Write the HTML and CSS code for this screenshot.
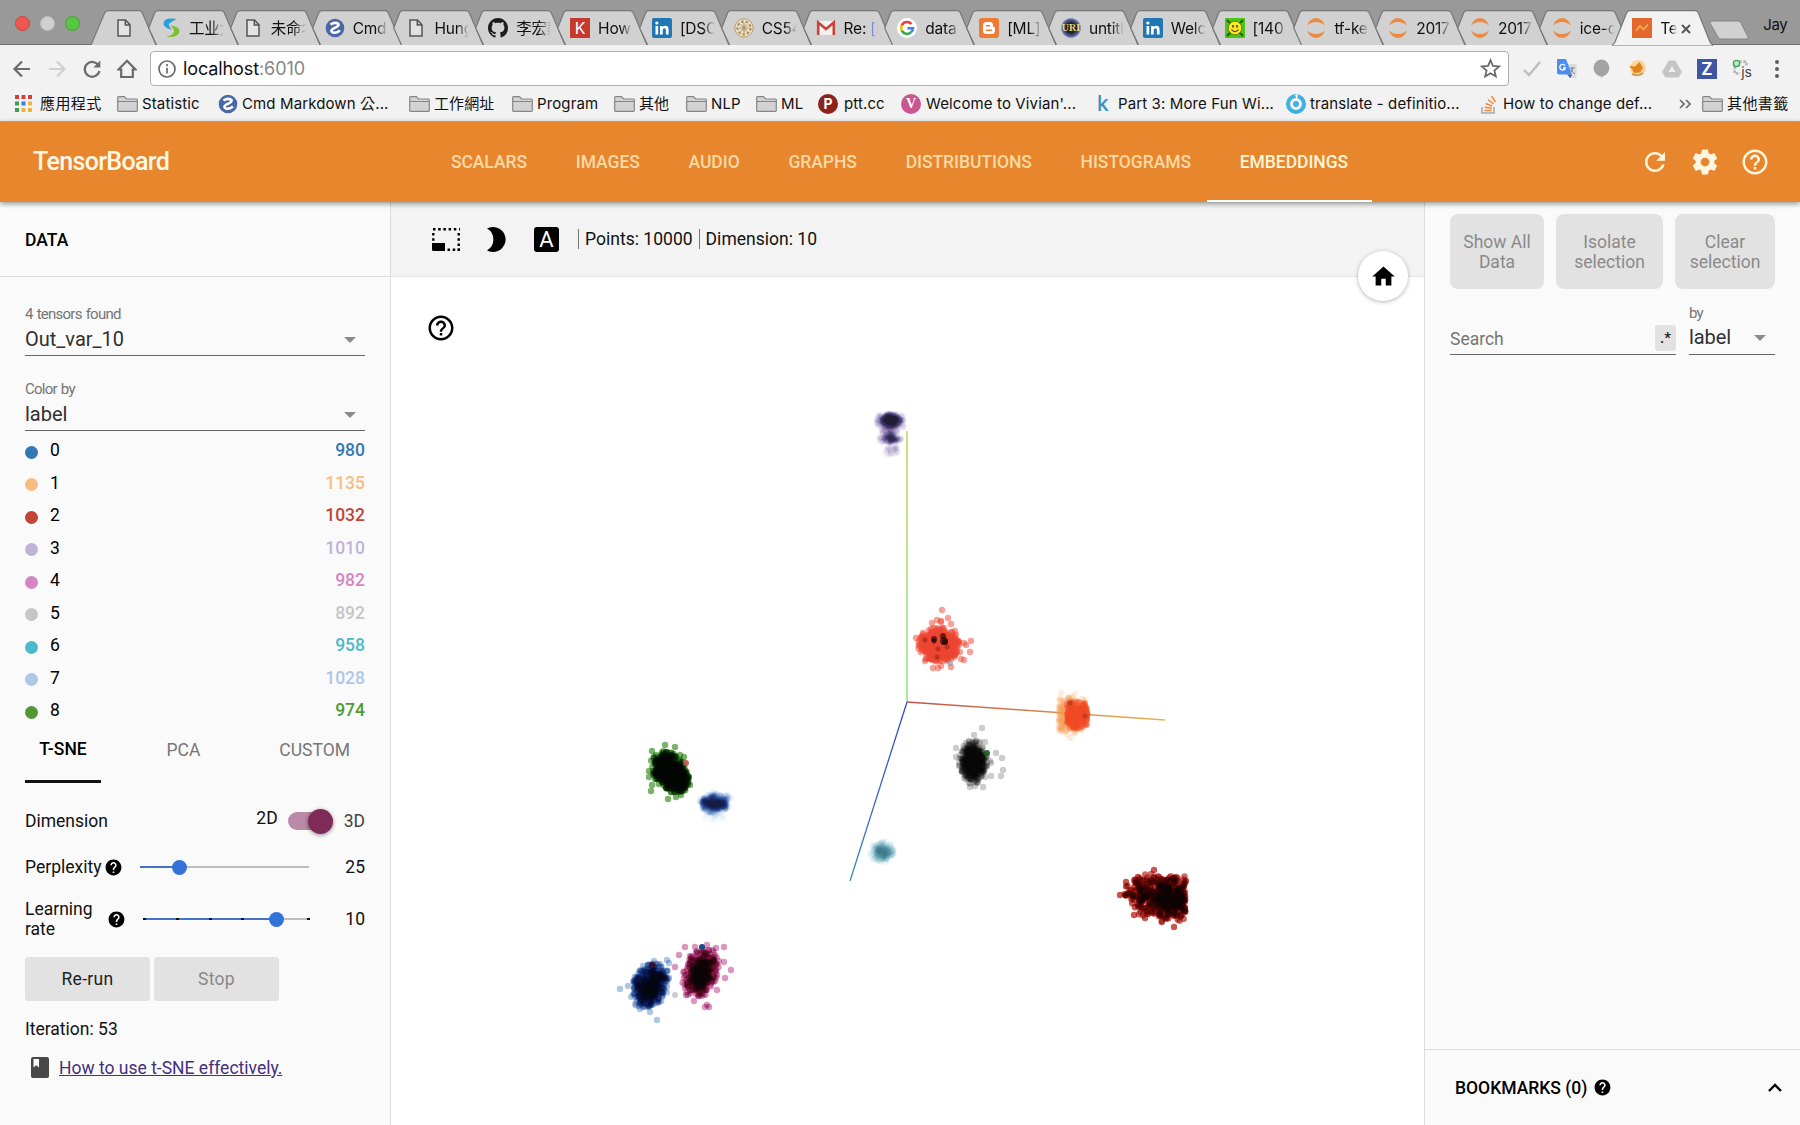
FILE: index.html
```html
<!DOCTYPE html>
<html lang="zh-Hant">
<head>
<meta charset="utf-8">
<title>TensorBoard</title>
<link rel="stylesheet" href="styles.css">
</head>
<body>
<svg class="defs" width="0" height="0">
  <symbol id="tab" viewBox="0 0 98 35"><path d="M15.5 35L7.7 18L13.6 3Q14.5 .7 17 .7H80Q82.500 .7 83.400 3L97 35"/></symbol>
  <symbol id="doc" viewBox="0 0 14 18"><path d="M1 1h7.500l4.500 4.800V17H1zM8.300 1v5H13" fill="#e3e3e3" stroke="#555" stroke-width="1.500"/></symbol>
  <symbol id="folder" viewBox="0 0 21 16"><path d="M.7 14.500V1.500Q.7.700 1.500.700H7.500L9.500 3H19.500Q20.300 3 20.300 4V14.500Q20.300 15.300 19.500 15.300H1.500Q.7 15.300.7 14.500zM.7 5.500H20.300" fill="#d3d3d3" stroke="#868686" stroke-width="1.200"/></symbol>
  <symbol id="cmd" viewBox="0 0 20 20"><circle cx="10" cy="10" r="9.300" fill="#4a68a8"/><path d="M5.500 6.500Q10 3.500 13.500 6Q14.500 8 8.500 10.500Q4.500 13 8 14.500Q11 15.500 15 12.500" fill="none" stroke="#fff" stroke-width="2.600"/></symbol>
  <symbol id="in" viewBox="0 0 20 20"><rect width="20" height="20" rx="2" fill="#1f78b4"/><path d="M3.500 8h2.700v8.500H3.500zM8 8h2.600v1.200Q11.500 7.800 13.400 7.800Q16.600 7.800 16.600 11.700V16.500H13.900V12Q13.900 10.200 12.400 10.200Q10.700 10.200 10.700 12.200V16.500H8z" fill="#fff"/><circle cx="4.850" cy="5" r="1.600" fill="#fff"/></symbol>
  <symbol id="jup" viewBox="0 0 20 20"><path d="M1 7.500Q4 0 10 0T19 7.500Q15 4 10 4T1 7.500zM1 12.500Q4 20 10 20T19 12.500Q15 16 10 16T1 12.500z" fill="#ec8a42"/></symbol>
  <symbol id="help" viewBox="0 0 24 24"><path d="M11 18h2v-2h-2v2zm1-16C6.480 2 2 6.480 2 12s4.480 10 10 10 10-4.480 10-10S17.520 2 12 2zm0 18c-4.410 0-8-3.590-8-8s3.590-8 8-8 8 3.590 8 8-3.590 8-8 8zm0-14c-2.210 0-4 1.790-4 4h2c0-1.100.9-2 2-2s2 .9 2 2c0 2-3 1.750-3 5h2c0-2.250 3-2.500 3-5 0-2.210-1.790-4-4-4z"/></symbol>
  <symbol id="helpf" viewBox="0 0 24 24"><path d="M12 2C6.480 2 2 6.480 2 12s4.480 10 10 10 10-4.480 10-10S17.520 2 12 2zm1 17h-2v-2h2v2zm2.070-7.750l-.9.920C13.450 12.900 13 13.500 13 15h-2v-.5c0-1.100.45-2.100 1.170-2.830l1.240-1.260c.37-.36.590-.86.590-1.410 0-1.100-.9-2-2-2s-2 .9-2 2H8c0-2.210 1.790-4 4-4s4 1.790 4 4c0 .88-.36 1.680-.93 2.250z"/></symbol>
  <symbol id="refresh" viewBox="0 0 24 24"><path d="M17.650 6.350C16.200 4.900 14.210 4 12 4c-4.420 0-7.990 3.580-7.990 8s3.570 8 7.990 8c3.730 0 6.840-2.550 7.730-6h-2.080c-.82 2.330-3.040 4-5.650 4-3.310 0-6-2.690-6-6s2.690-6 6-6c1.660 0 3.140.69 4.220 1.780L13 11h7V4l-2.350 2.350z"/></symbol>
</svg>

<header class="browser">
  <div class="strip">
    <div class="lights"><i class="red"></i><i class="gray"></i><i class="green"></i></div>
    <div class="tabs">
      <div class="tab first"><svg class="shape" viewBox="0 0 66 35"><path d="M0 35L13.600 3Q14.500 .7 17 .7H48Q50.500 .7 51.400 3L65 35"/></svg><svg class="doc"><use href="#doc"/></svg></div>
      <div class="tab"><svg class="shape"><use href="#tab"/></svg><svg class="fav" viewBox="0 0 20 20"><path d="M16 1Q2-1 2.500 6Q3 9.500 11 12Q6 6.500 9 5Q11 3 16 1z" fill="#2a9fe0"/><path d="M5 19Q19 20 18.500 12Q17 8 9 7.500Q14 11 13 14Q12 17 5 19z" fill="#7cbf2a"/></svg><span>工业大</span></div>
      <div class="tab"><svg class="shape"><use href="#tab"/></svg><svg class="fav d"><use href="#doc"/></svg><span>未命名</span></div>
      <div class="tab"><svg class="shape"><use href="#tab"/></svg><svg class="fav"><use href="#cmd"/></svg><span>Cmd</span></div>
      <div class="tab"><svg class="shape"><use href="#tab"/></svg><svg class="fav d"><use href="#doc"/></svg><span>Hung</span></div>
      <div class="tab"><svg class="shape"><use href="#tab"/></svg><svg class="fav" viewBox="0 0 16 16"><path fill="#1d1d1d" d="M8 0C3.580 0 0 3.580 0 8c0 3.540 2.290 6.530 5.470 7.590.4.070.55-.17.55-.38 0-.19-.01-.82-.01-1.490-2.010.37-2.530-.49-2.690-.94-.09-.23-.48-.94-.82-1.130-.28-.15-.68-.52-.01-.53.630-.01 1.080.58 1.230.82.720 1.210 1.870.87 2.330.66.070-.52.280-.87.510-1.070-1.780-.2-3.640-.89-3.640-3.950 0-.87.310-1.590.82-2.150-.08-.2-.36-1.020.08-2.120 0 0 .67-.21 2.200.82.640-.18 1.320-.27 2-.27s1.360.09 2 .27c1.530-1.040 2.200-.82 2.200-.82.440 1.100.16 1.920.08 2.120.51.560.82 1.270.82 2.150 0 3.070-1.870 3.750-3.650 3.950.29.250.54.730.54 1.480 0 1.070-.01 1.930-.01 2.200 0 .21.150.46.550.38A8.010 8.010 0 0016 8c0-4.420-3.580-8-8-8z"/></svg><span>李宏毅</span></div>
      <div class="tab"><svg class="shape"><use href="#tab"/></svg><b class="fav sq k">K</b><span>How</span></div>
      <div class="tab"><svg class="shape"><use href="#tab"/></svg><svg class="fav"><use href="#in"/></svg><span>[DSC</span></div>
      <div class="tab"><svg class="shape"><use href="#tab"/></svg><svg class="fav" viewBox="0 0 20 20"><circle cx="10" cy="10" r="9.200" fill="#e9dfca" stroke="#b89c6a"/><circle cx="10" cy="10" r="6.500" fill="none" stroke="#a98a53" stroke-width="2" stroke-dasharray="2.500 2"/><path d="M10 5v10M5.500 10h9M7 6.500l6 7M13 6.500l-6 7" stroke="#a98a53"/></svg><span>CS54</span></div>
      <div class="tab"><svg class="shape"><use href="#tab"/></svg><svg class="fav" viewBox="0 0 20 20"><path d="M1 3h18v14H1z" fill="#f4f1f0"/><path d="M2.200 17V4.500L10 11l7.800-6.500V17" fill="none" stroke="#cc4138" stroke-width="2.600"/></svg><span>Re: <em>[S</em></span></div>
      <div class="tab"><svg class="shape"><use href="#tab"/></svg><svg class="fav" viewBox="0 0 20 20"><circle cx="10" cy="10" r="10" fill="#fff"/><g fill="none" stroke-width="2.600"><path d="M14.500 6A6 6 0 0 0 4.700 7.300" stroke="#ea4335"/><path d="M4.700 7.300A6 6 0 0 0 4.700 12.700" stroke="#fbbc05"/><path d="M4.700 12.700A6 6 0 0 0 13.800 14.600" stroke="#34a853"/><path d="M13.800 14.600A6 6 0 0 0 16 10.300H10.300" stroke="#4285f4"/></g></svg><span>data</span></div>
      <div class="tab"><svg class="shape"><use href="#tab"/></svg><svg class="fav" viewBox="0 0 20 20"><rect width="20" height="20" rx="3" fill="#ee7a33"/><path d="M7.500 4H11Q14 4 14 7.500Q14 9 15 9T16 10V12.500Q16 16 12.500 16H7.500Q4 16 4 12.500V7.500Q4 4 7.500 4z" fill="#fff"/><path d="M7.500 7.700h3M7.500 12.300h5" stroke="#ee7a33" stroke-width="1.600" stroke-linecap="round"/></svg><span>[ML]</span></div>
      <div class="tab"><svg class="shape"><use href="#tab"/></svg><b class="fav uri">URI</b><span>untitl</span></div>
      <div class="tab"><svg class="shape"><use href="#tab"/></svg><svg class="fav"><use href="#in"/></svg><span>Welc</span></div>
      <div class="tab"><svg class="shape"><use href="#tab"/></svg><svg class="fav" viewBox="0 0 20 20"><path d="M0 0h20v20H0z" fill="#4bc51b"/><path d="M2 2l4 4M18 2l-4 4M2 18l4-4M18 18l-4-4" stroke="#245c12" stroke-width="2"/><circle cx="10" cy="10" r="6.800" fill="#ffe91f" stroke="#6b7d10"/><path d="M6.500 11.500Q10 16 13.500 11.500" fill="none" stroke="#333" stroke-width="1.200"/><path d="M8 7v2.500M12 7v2.500" stroke="#333" stroke-width="1.500"/></svg><span>[140</span></div>
      <div class="tab"><svg class="shape"><use href="#tab"/></svg><svg class="fav"><use href="#jup"/></svg><span>tf-ker</span></div>
      <div class="tab"><svg class="shape"><use href="#tab"/></svg><svg class="fav"><use href="#jup"/></svg><span>2017</span></div>
      <div class="tab"><svg class="shape"><use href="#tab"/></svg><svg class="fav"><use href="#jup"/></svg><span>2017</span></div>
      <div class="tab"><svg class="shape"><use href="#tab"/></svg><svg class="fav"><use href="#jup"/></svg><span>ice-c</span></div>
      <div class="tab active"><svg class="shape" viewBox="0 0 101 36"><path d="M0 35Q2 34.500 3 32L14.600 3Q15.500 .7 18 .7H83Q85.500 .7 86.400 3L98 32Q99 34.500 101 35V36H0z"/></svg><svg class="fav" viewBox="0 0 20 20"><path d="M0 0h20v20H0z" fill="#e4682e"/><path d="M4 13l4-5 3.500 3.500L16 6.500" fill="none" stroke="#f7b048" stroke-width="1.600"/></svg><span>Ten</span><svg class="close" viewBox="0 0 10 10"><path d="M1 1l8 8M9 1l-8 8"/></svg></div>
    </div>
    <svg class="newtab" viewBox="0 0 41 20"><path d="M3 1H29Q31 1 32 3L39 17Q40 19 38 19H12Q10 19 9 17L1 3Q.5 1 3 1z"/></svg>
    <span class="user">Jay</span>
  </div>
  <div class="toolbar">
    <svg class="nb" viewBox="0 0 20 20"><path d="M18 10H3M10 2.500L2.500 10L10 17.500"/></svg>
    <svg class="nb off" viewBox="0 0 20 20"><path d="M2 10H17M10 2.500L17.500 10L10 17.500"/></svg>
    <svg class="nb" viewBox="0 0 20 20"><path d="M16.500 6.500A7.400 7.400 0 1 0 17.400 12"/><path d="M18.300 1.500V8.500H11.300z" fill="#6b6b6b" stroke="none"/></svg>
    <svg class="nb" viewBox="0 0 20 20"><path d="M1.500 10.500L10 1.800L18.500 10.500H15.800V18H4.200V10.500z"/></svg>
    <div class="address">
      <svg class="info" viewBox="0 0 18 18"><circle cx="9" cy="9" r="8"/><path d="M9 4v2.200M9 7.800V13.500"/></svg>
      <span class="url">localhost<i>:6010</i></span>
      <svg class="star" viewBox="0 0 20 20"><path d="M10 2l2.300 5.500 6 .5-4.600 3.900 1.400 5.800L10 14.600l-5.100 3.100 1.400-5.800L1.700 8l6-.5z"/></svg>
    </div>
    <div class="exts">
      <svg viewBox="0 0 20 20"><path d="M2 11l5 5L18 3" fill="none" stroke="#bdbdbd" stroke-width="2.400"/></svg>
      <svg viewBox="0 0 20 20"><path d="M8 5h11.500v14H12z" fill="#dcdcdc"/><path d="M0 0h9l6 15.500H2Q0 15.500 0 13.500z" fill="#4c8df0"/><path d="M10 15.500h5L13.500 19z" fill="#2f60b8"/><path d="M8 6.800A2.800 2.800 0 1 0 8.300 9H6" fill="none" stroke="#fff" stroke-width="1.300"/><path d="M13 9h5M15.500 8q.5 4-2.500 6M14 10q1 3 4 5" fill="none" stroke="#789" /></svg>
      <svg viewBox="0 0 20 20"><path d="M10 .5a8.300 8.500 0 0 1 1 16.700L9.500 19.500V17.500A8.300 8.500 0 0 1 10 .5z" fill="#a3a3a3"/></svg>
      <svg viewBox="0 0 20 20"><circle cx="11" cy="9" r="8" fill="#fbd69b"/><path d="M2 7l6 .5L12.500 3 16 9l-3 4.500-6 .5-2-4z" fill="#e3821e"/><path d="M5 15q6 3 11-1" fill="none" stroke="#c9a25f" stroke-width="2"/></svg>
      <svg viewBox="0 0 20 20"><path d="M6.700 1.500h6.600L20 13l-3.300 5.500H3.300L0 13z" fill="#c5c5c5"/><path d="M10 7l3.500 6h-7z" fill="#eee"/></svg>
      <b class="z">Z</b>
      <span class="js"><svg viewBox="0 0 20 20"><path d="M8 3h8v5M3 8v8h6" fill="none" stroke="#b9b9b9" stroke-width="3" stroke-dasharray="3 1.500"/><circle cx="5" cy="5" r="3.500" fill="#bfe6c8" stroke="#3aa657" stroke-width="1.500"/></svg>js</span>
      <svg viewBox="0 0 20 20" fill="#5f5f5f"><circle cx="10" cy="3" r="2"/><circle cx="10" cy="10" r="2"/><circle cx="10" cy="17" r="2"/></svg>
    </div>
  </div>
  <nav class="bookmarks">
    <a><svg class="apps" viewBox="0 0 17 17"><path d="M0 0h4v4H0zM6.500 0h4v4h-4zM13 0h4v4h-4z" fill="#d0423a"/><path d="M0 6.500h4v4H0zM0 13h4v4H0z" fill="#3f9b57"/><path d="M6.500 6.500h4v4h-4z" fill="#3c7de0"/><path d="M6.500 13h4v4h-4zM13 6.500h4v4h-4zM13 13h4v4h-4z" fill="#ebb43a"/></svg>應用程式</a>
    <a><svg class="fo"><use href="#folder"/></svg>Statistic</a>
    <a><svg class="bi"><use href="#cmd"/></svg>Cmd Markdown 公...</a>
    <a><svg class="fo"><use href="#folder"/></svg>工作網址</a>
    <a><svg class="fo"><use href="#folder"/></svg>Program</a>
    <a><svg class="fo"><use href="#folder"/></svg>其他</a>
    <a><svg class="fo"><use href="#folder"/></svg>NLP</a>
    <a><svg class="fo"><use href="#folder"/></svg>ML</a>
    <a><b class="bi round ptt">P</b>ptt.cc</a>
    <a><b class="bi round viv">V</b>Welcome to Vivian'...</a>
    <a><b class="kk">k</b>Part 3: More Fun Wi...</a>
    <a><svg class="bi" viewBox="0 0 20 20"><circle cx="10" cy="10" r="8" fill="none" stroke="#3fb0e0" stroke-width="4"/><circle cx="10" cy="10" r="3" fill="#3fb0e0"/><path d="M9 1l3-1-1 6z" fill="#fff"/></svg>translate - definitio...</a>
    <a><svg class="so" viewBox="0 0 16 20"><path d="M1 13v6h12v-6" fill="none" stroke="#a5a5a5" stroke-width="1.500"/><path d="M3.500 16.500h7M3.700 13.200l7 1M4.700 9.500l6.500 2.700M7 5.500l5.500 4.500M10.500 2l4 6" stroke="#ec8a3a" stroke-width="1.500"/></svg>How to change def...</a>
    <a><svg class="more" viewBox="0 0 12 10"><path d="M1 1l4 4-4 4M7 1l4 4-4 4"/></svg></a>
    <a><svg class="fo"><use href="#folder"/></svg>其他書籤</a>
  </nav>
</header>

<header class="appbar">
  <h1>TensorBoard</h1>
  <nav>
    <a>SCALARS</a><a>IMAGES</a><a>AUDIO</a><a>GRAPHS</a><a>DISTRIBUTIONS</a><a>HISTOGRAMS</a><a class="on">EMBEDDINGS</a>
  </nav>
  <div class="actions">
    <svg><use href="#refresh"/></svg>
    <svg viewBox="0 0 24 24"><path d="M19.430 12.980c.04-.32.070-.64.070-.98s-.03-.66-.07-.98l2.110-1.650c.19-.15.240-.42.120-.64l-2-3.460c-.12-.22-.39-.3-.61-.22l-2.490 1c-.52-.4-1.080-.73-1.690-.98l-.38-2.650C14.460 2.180 14.250 2 14 2h-4c-.25 0-.46.180-.49.420l-.38 2.650c-.61.250-1.170.590-1.690.98l-2.490-1c-.23-.09-.49 0-.61.220l-2 3.460c-.13.220-.07.490.12.640l2.110 1.650c-.04.320-.07.650-.07.980s.03.660.07.980l-2.110 1.650c-.19.150-.24.420-.12.640l2 3.460c.12.220.39.300.61.220l2.490-1c.52.400 1.080.730 1.690.980l.38 2.650c.03.240.24.420.49.420h4c.25 0 .46-.18.490-.42l.38-2.650c.61-.25 1.170-.59 1.690-.98l2.490 1c.23.090.49 0 .61-.22l2-3.460c.12-.22.070-.49-.12-.64l-2.110-1.650zM12 15.500c-1.930 0-3.500-1.570-3.500-3.500s1.570-3.500 3.500-3.500 3.500 1.570 3.500 3.500-1.570 3.500-3.500 3.500z"/></svg>
    <svg><use href="#help"/></svg>
  </div>
</header>

<main class="workspace">
  <aside class="left">
    <h2>DATA</h2>
    <div class="select"><label>4 tensors found</label><div>Out_var_10</div></div>
    <div class="select"><label>Color by</label><div>label</div></div>
    <ul class="legend">
      <li class="c0"><i></i><span>0</span><b>980</b></li>
      <li class="c1"><i></i><span>1</span><b>1135</b></li>
      <li class="c2"><i></i><span>2</span><b>1032</b></li>
      <li class="c3"><i></i><span>3</span><b>1010</b></li>
      <li class="c4"><i></i><span>4</span><b>982</b></li>
      <li class="c5"><i></i><span>5</span><b>892</b></li>
      <li class="c6"><i></i><span>6</span><b>958</b></li>
      <li class="c7"><i></i><span>7</span><b>1028</b></li>
      <li class="c8"><i></i><span>8</span><b>974</b></li>
    </ul>
    <div class="modes"><a class="on">T-SNE</a><a>PCA</a><a>CUSTOM</a></div>
    <div class="row dim"><span>Dimension</span><span class="d2">2D</span><div class="toggle"><i></i></div><span class="d3">3D</span></div>
    <div class="row perp"><span>Perplexity</span><svg class="hf"><use href="#helpf"/></svg><div class="slider"><i></i></div><span class="val">25</span></div>
    <div class="row rate"><span class="two">Learning rate</span><svg class="hf"><use href="#helpf"/></svg><div class="slider"><i></i><u></u><u></u><u></u><u></u><u></u><u></u></div><span class="val">10</span></div>
    <div class="buttons"><button>Re-run</button><button class="off">Stop</button></div>
    <p class="iter">Iteration: 53</p>
    <p class="howto"><svg viewBox="0 0 18 21"><path d="M2 0H16Q18 0 18 2V19Q18 21 16 21H2Q0 21 0 19V2Q0 0 2 0zM2.500 2V10.500L5.200 8.300L8 10.500V2z" fill-rule="evenodd"/></svg><a>How to use t-SNE effectively.</a></p>
  </aside>

  <section class="center">
    <div class="tools">
      <svg class="sel" viewBox="0 0 28 23"><path d="M1 1.200H28" stroke-dasharray="2.500 2.700"/><path d="M26.700 5V23M1.300 5V14" stroke-dasharray="2.500 2.700"/><path d="M15.500 21.700H28" stroke-dasharray="2.500 2.700"/><path d="M0 15h13v8H1.500Q0 23 0 21.500z" fill="#000" stroke="none"/></svg>
      <svg class="moon" viewBox="0 0 19 25"><path d="M6.500 0A12.500 12.500 0 1 1 0 23.400A12.500 12.500 0 0 0 0 1.600A12.500 12.500 0 0 1 6.500 0z"/></svg>
      <b class="abox">A</b>
      <span class="stat">Points: 10000</span><span class="stat">Dimension: 10</span>
    </div>
    <div class="plot">
      <canvas id="plot" width="1033" height="848"></canvas>
      <svg class="phelp"><use href="#help"/></svg>
      <div class="home"><svg viewBox="0 0 24 24"><path d="M10 20v-6h4v6h5v-8h3L12 3 2 12h3v8z"/></svg></div>
    </div>
  </section>

  <aside class="right">
    <div class="acts"><button>Show All Data</button><button>Isolate selection</button><button>Clear selection</button></div>
    <div class="find">
      <div class="search"><span>Search</span><b>.*</b></div>
      <div class="select by"><label>by</label><div>label</div></div>
    </div>
    <footer><span>BOOKMARKS (0)</span><svg class="hf"><use href="#helpf"/></svg><svg class="up" viewBox="0 0 14 9"><path d="M1 8l6-6 6 6"/></svg></footer>
  </aside>
</main>
<script src="plot.js"></script>
</body>
</html>
```
FILE: styles.css
```css
* { box-sizing: border-box; }
body { margin: 0; width: 1800px; height: 1125px; overflow: hidden; display: flex; flex-direction: column; font: 17.5px/20px Roboto, "Noto Sans CJK TC", sans-serif; color: #111; background: #fff; }
h1, h2, p, ul { margin: 0; padding: 0; }
i, em { font-style: normal; }
svg { display: block; flex: none; }
.defs { position: absolute; }

/* browser chrome */
.browser { height: 121px; flex: none; background: #f2f2f2; font-family: Inter, "Noto Sans CJK TC", "Noto Sans CJK SC", sans-serif; }
.strip { height: 45px; display: flex; align-items: flex-start; background: #999; border-bottom: 1px solid #6f6f6f; }
.lights { display: flex; gap: 10px; padding: 16px 0 0 15px; width: 91px; }
.lights i { width: 15px; height: 15px; border-radius: 50%; border: 1px solid #c94640; background: #ef5850; }
.lights .gray { background: #d0d0d0; border-color: #bdbdbd; }
.lights .green { background: #57c640; border-color: #45a333; }
.tabs { display: flex; padding-top: 10px; }
.tab { position: relative; width: 98px; height: 35px; margin-right: -16.200px; padding: 8px 0 0 20px; display: flex; flex: none; font-size: 15.500px; letter-spacing: -.2px; }
.tab.first { width: 66px; margin-right: -16px; padding-left: 26px; padding-top: 9px; }
.tab .shape { position: absolute; inset: 0; width: 100%; height: 35px; fill: #d1d1d1; stroke: #777; stroke-width: 1.200; }
.tab .doc { position: relative; width: 14px; height: 18px; }
.tab .fav { position: relative; flex: none; width: 20px; height: 20px; }
.tab .fav.d { height: 18px; margin-top: 1px; }
.tab span { position: relative; margin: 0 0 0 8px; width: 35px; overflow: hidden; white-space: nowrap; line-height: 21px; -webkit-mask-image: linear-gradient(90deg, #000 65%, transparent); mask-image: linear-gradient(90deg, #000 65%, transparent); }
.tab em { color: #3455d0; }
.tab.active { width: 101px; margin: 0 0 0 -1.500px; height: 36px; padding-left: 20px; }
.tab.active .shape { height: 36px; fill: #f2f2f2; }
.tab.active span { width: 17px; }
.tab .close { position: relative; width: 10px; height: 10px; margin: 6px 0 0 4px; stroke: #555; stroke-width: 2; }
.sq { display: flex; align-items: center; justify-content: center; font-size: 16px; font-weight: 400; color: #fff; background: #c63a2d; }
.uri { font: 700 10px/20px "Liberation Serif", serif; text-align: center; letter-spacing: 0; color: #e3d67c; background: radial-gradient(#222 35%, #5866a0 60%, #9aa5cc 70%, transparent 72%); }
.newtab { width: 41px; height: 20px; margin: 20px 0 0 -4px; fill: #d1d1d1; stroke: #858585; }
.user { margin: 15px 0 0 13px; font-size: 15px; line-height: 20px; letter-spacing: -.3px; }
.toolbar { height: 47px; display: flex; align-items: center; padding: 0 13px 0 12px; }
.nb { width: 20px; height: 20px; margin-right: 15px; fill: none; stroke: #6b6b6b; stroke-width: 2.200; }
.nb.off { stroke: #d0d0d0; }
.nb:nth-of-type(4) { margin-right: 13px; }
.address { width: 1359px; height: 35px; border: 1px solid #b0b0b0; border-radius: 4px; background: #fff; display: flex; align-items: center; padding: 0 7px; }
.info { width: 18px; height: 18px; fill: none; stroke: #6b6b6b; stroke-width: 1.700; }
.url { margin-left: 7px; font-size: 18px; letter-spacing: -.1px; }
.url i { color: #868686; }
.star { width: 21px; height: 21px; margin-left: auto; fill: none; stroke: #666; stroke-width: 1.600; }
.exts { display: flex; align-items: center; gap: 15px; margin-left: 13px; }
.exts > svg { width: 20px; height: 20px; }
.z { width: 20px; height: 20px; background: #3f54a3; color: #fff; text-align: center; font-size: 17px; line-height: 20px; }
.js { position: relative; width: 20px; height: 20px; font-size: 14px; text-align: right; line-height: 25px; color: #444; }
.js svg { position: absolute; inset: 0; width: 18px; height: 18px; z-index: 0; }
.bookmarks { display: grid; grid-template-columns: 102px 101px 191px 103px 102px 72px 70px 62px 83px 193px 192px 193px 200px 23px 1fr; padding-left: 15px; height: 23px; }
.bookmarks a { display: flex; align-items: center; white-space: nowrap; font-size: 15px; letter-spacing: .12px; }
.bookmarks a:first-child, .bookmarks a:last-child { letter-spacing: .4px; }
.apps { width: 17px; height: 17px; margin-right: 8px; }
.fo { width: 21px; height: 16px; margin-right: 4px; }
.bi { width: 20px; height: 20px; margin-right: 4px; flex: none; }
.round { border-radius: 50%; color: #fff; text-align: center; font-size: 14px; line-height: 20px; }
.ptt { background: #8c211d; margin-right: 6px; }
.viv { background: #c9568f; font-family: "Liberation Serif", serif; margin-right: 5px; }
.kk { width: 24px; padding-left: 3px; color: #3595c0; font-size: 21px; font-weight: 500; }
.so { width: 16px; height: 20px; margin: 0 6px 0 2px; }
.more { width: 12px; height: 10px; fill: none; stroke: #6b6b6b; stroke-width: 1.700; }

/* app bar */
.appbar { position: relative; z-index: 2; height: 81px; flex: none; display: flex; align-items: center; background: #e8862e; color: #fff8e6; box-shadow: 0 2px 5px rgba(0,0,0,.4); border-top: 1px solid #d8984e; padding: 0 30px 0 33px; }
h1 { width: 393.500px; font-size: 25px; line-height: 30px; font-weight: 500; letter-spacing: -.65px; }
.appbar nav { display: flex; align-self: stretch; font-weight: 500; line-height: 80px; }
.appbar nav a { padding: 0 24.400px; color: #fbd9a4; letter-spacing: -.05px; }
.appbar nav .on { position: relative; color: #fff5d8; }
.appbar .on::after { content: ""; position: absolute; left: -8px; right: 1px; bottom: 0; height: 2.500px; background: #fff; }
.actions { display: flex; gap: 20px; margin-left: auto; }
.actions svg { width: 30px; height: 30px; fill: #fff6e0; }

.workspace { flex: 1; display: flex; min-height: 0; }
.left { width: 391px; background: #fafafa; border-right: 1px solid #ddd; display: flex; flex-direction: column; padding: 0 25px; }
.left h2 { margin: 0 -25px; padding: 0 25px; height: 75px; line-height: 76px; font-size: 17.500px; font-weight: 500; color: #000; border-bottom: 1px solid #ddd; flex: none; }
.select { border-bottom: 1px solid #666; height: 51px; margin-top: 28px; position: relative; display: flex; flex-direction: column; justify-content: flex-start; flex: none; }
.left .select + .select { margin-top: 24px; }
.select label { font-size: 15px; line-height: 18px; color: #757575; letter-spacing: -.9px; word-spacing: 1px; }
.left .select label { letter-spacing: -.75px; }
.select div { font-size: 20px; line-height: 24px; margin-top: 4px; color: #303030; letter-spacing: 0; display: flex; justify-content: space-between; align-items: center; }
.select div::after { content: ""; border: 6px solid transparent; border-top-color: #8c8c8c; border-bottom: 0; margin-right: 9px; margin-top: 1px; }
.legend { list-style: none; height: 287px; margin-top: 1px; padding-top: 2px; overflow: hidden; flex: none; }
.legend li { display: flex; height: 32.500px; align-items: center; line-height: 32px; }
.legend i { width: 13px; height: 13px; border-radius: 50%; background: var(--c); margin: 4px 12px 0 0; }
.legend b { margin-left: auto; font-weight: 500; color: var(--c); }
.legend span { color: #000; }
.c0 { --c: #3278b4; } .c1 { --c: #f7bd80; } .c2 { --c: #c2453a; }
.c3 { --c: #bfb4d8; } .c4 { --c: #d486c2; } .c5 { --c: #c6c6c6; }
.c6 { --c: #4fb8cd; } .c7 { --c: #b0c6e6; } .c8 { --c: #4f9a33; }
.modes { display: flex; height: 64px; flex: none; line-height: 63px; color: #777; }
.modes a:first-child { width: 76px; text-align: center; color: #000; font-weight: 500; border-bottom: 3px solid #111; line-height: 61px; }
.modes a:nth-child(2) { margin-left: 65.500px; }
.modes a:nth-child(3) { margin-left: auto; margin-right: 15px; }
.row { display: flex; align-items: center; flex: none; }
.dim { height: 30px; margin-top: 23px; }
.dim .d2 { margin-left: auto; transform: translateY(-3.500px); }
.toggle { width: 42px; height: 18px; margin: 0 14px 0 10px; border-radius: 9px; background: #ba8aa8; display: flex; justify-content: flex-end; align-items: center; }
.toggle i { flex: none; width: 25px; height: 25px; border-radius: 50%; background: #7f2b57; margin-right: -3px; box-shadow: 0 1px 4px rgba(0,0,0,.45); }
.dim .d3 { color: #444; }
.perp { height: 30px; margin-top: 16px; }
.hf { width: 19px; height: 19px; fill: #000; }
.perp .hf { margin: 0 0 0 3px; }
.slider { width: 169px; height: 2.500px; background: linear-gradient(90deg, #4472c4 24%, #bdbdbd 24%); display: flex; align-items: center; }
.perp .slider { margin-left: auto; margin-right: 21px; }
.slider i { width: 15px; height: 15px; border-radius: 50%; background: #3372d8; margin-left: 32px; flex: none; }
.val { width: 35px; text-align: right; }
.rate { margin-top: 15px; height: 44px; }
.two { width: 82px; }
.rate .hf { margin-left: 0; }
.rate .slider { position: relative; width: 167px; margin-left: auto; margin-right: 20px; background: linear-gradient(90deg, #4472c4 80%, #bdbdbd 80%); justify-content: space-between; }
.rate .slider i { position: absolute; left: 126px; margin: 0; z-index: 1; }
.slider u { width: 3px; height: 2.500px; background: #111; }
.buttons { display: flex; gap: 4px; margin-top: 16px; flex: none; }
button { border: 0; background: #e2e2e2; font: inherit; color: #222; border-radius: 3px; }
.buttons button { width: 125px; height: 44px; letter-spacing: .3px; }
.buttons .off { color: #888; }
.iter { margin-top: 18px; }
.howto { display: flex; align-items: center; margin-top: 18px; padding-left: 6px; }
.howto svg { width: 18px; height: 21px; fill: #484848; margin-right: 10px; }
.howto a { color: #45307a; text-decoration: underline; }

.center { width: 1033px; display: flex; flex-direction: column; }
.tools { height: 75px; flex: none; background: #f3f3f3; border-bottom: 1px solid #e6e6e6; display: flex; align-items: center; padding-left: 41px; }
.sel { width: 28px; height: 23px; fill: none; stroke: #000; stroke-width: 2.400; }
.moon { width: 19px; height: 25px; margin-left: 27px; }
.abox { width: 25px; height: 25px; margin: 0 19px 0 28px; border-radius: 3px; background: #000; color: #fff; font-weight: 400; font-size: 22px; line-height: 26px; text-align: center; }
.stat { border-left: 1px solid #777; padding: 0 6px; letter-spacing: .02px; }
.plot { position: relative; flex: 1; min-height: 0; }
canvas { display: block; }
.phelp { position: absolute; left: 35px; top: 36px; width: 30px; height: 30px; }
.home { position: absolute; left: 967px; top: -26px; width: 50px; height: 50px; border-radius: 50%; background: #fff; box-shadow: 0 1px 4px rgba(0,0,0,.3); display: flex; align-items: center; justify-content: center; }
.home svg { width: 27px; height: 27px; }

.right { flex: 1; background: #fafafa; border-left: 1px solid #ddd; display: flex; flex-direction: column; }
.acts { display: flex; justify-content: space-between; padding: 12px 25px 0; }
.acts button { height: 75px; border-radius: 8px; color: #8a8a8a; line-height: 20px; padding: 0 11px; }
.acts button:nth-child(1) { width: 94px; }
.acts button:nth-child(2) { width: 107px; }
.acts button:nth-child(3) { width: 100px; }
.find { display: flex; justify-content: space-between; align-items: flex-end; padding: 0 25px; height: 66px; }
.search { width: 226px; height: 30px; border-bottom: 1px solid #666; display: flex; justify-content: space-between; color: #757575; line-height: 29px; }
.search b { width: 21px; height: 26px; border-radius: 3px; background: #e2e2e2; color: #222; font-weight: 500; font-size: 15px; line-height: 26px; text-align: center; }
.by { width: 86px; margin: 0; }
.by div { margin-top: 3px; letter-spacing: -.1px; }
.right footer { margin-top: auto; height: 76px; border-top: 1px solid #ddd; display: flex; align-items: center; padding: 0 18px 0 30px; font-weight: 500; color: #000; }
.right footer .hf { margin-left: 6px; }
.up { width: 14px; height: 9px; margin-left: auto; fill: none; stroke: #000; stroke-width: 2.400; }
```
FILE: plot.js
```javascript
const canvas = document.getElementById('plot');
const ctx = canvas.getContext('2d');
ctx.translate(-391, -277);

let seed = 7;
function rand() {
  seed = (seed * 1664525 + 1013904223) % 4294967296;
  return seed / 4294967296;
}
function gauss() {
  return Math.sqrt(-2 * Math.log(rand() + 1e-9)) * Math.cos(2 * Math.PI * rand());
}
function dot(x, y, r, color, alpha) {
  ctx.globalAlpha = alpha;
  ctx.fillStyle = color;
  ctx.beginPath();
  ctx.arc(x, y, r, 0, 7);
  ctx.fill();
}
// skew leans the cloud: positive shifts its upper points to the right
// box clouds are spread evenly across instead of bunching at the middle
function cloud(c) {
  ctx.globalCompositeOperation = c.mode || 'multiply';
  for (let k = 0; k < c.n; k++) {
    let a, b;
    do {
      a = c.box ? (rand() - .5) * 3.6 : gauss();
      b = gauss();
    } while (c.box ? Math.abs(b) > c.cut : Math.hypot(a, b) > c.cut);
    dot(c.x + a * c.sx - b * c.sy * (c.skew || 0), c.y + b * c.sy, c.r, c.color, c.alpha);
  }
  for (const p of c.extra || []) dot(p[0], p[1], c.r, c.color, c.alpha);
}
function axis(x1, y1, from, to) {
  const g = ctx.createLinearGradient(907, 702, x1, y1);
  g.addColorStop(0, from);
  g.addColorStop(1, to);
  ctx.globalCompositeOperation = 'source-over';
  ctx.globalAlpha = 1;
  ctx.strokeStyle = g;
  ctx.lineWidth = 1.3;
  ctx.beginPath();
  ctx.moveTo(907, 702);
  ctx.lineTo(x1, y1);
  ctx.stroke();
}
axis(907, 431, '#7ade6c', '#b9d332');
axis(1165, 720, '#c4524a', '#e8b252');
axis(850, 881, '#3a49b8', '#3689c4');

const clouds = [
  {x: 891, y: 420, sx: 5.5, sy: 4, n: 420, cut: 1.7, r: 3, color: '#6f5fa8', alpha: .1},
  {x: 890, y: 421, sx: 7.5, sy: 4.5, n: 260, cut: 1.5, r: 3, box: true, color: '#8a78bd', alpha: .06},
  {x: 890, y: 430, sx: 5.5, sy: 8, n: 180, cut: 1.6, r: 3, color: '#8a78bd', alpha: .07},
  {x: 891, y: 438, sx: 4, sy: 2.5, n: 130, cut: 2.2, r: 2.5, color: '#6f5fa8', alpha: .09},
  {x: 890, y: 440, sx: 6.5, sy: 2, n: 60, cut: 1.6, r: 3, box: true, color: '#8a78bd', alpha: .07},
  {x: 891, y: 450, sx: 4.5, sy: 3, n: 45, cut: 2, r: 3, color: '#8a78bd', alpha: .06},
  {x: 939, y: 645, sx: 11, sy: 9.5, n: 480, cut: 1.9, r: 3.2, color: '#ee4632', alpha: .5, mode: 'source-over',
    extra: [[942,610],[948,618],[937,620],[941,622],[951,624],[932,623],[916,638],[971,641],[964,643],[970,652],[961,659],[964,660],[960,652],[966,645],[951,667],[938,668],[941,666],[933,668],[925,661],[955,631],[956,644],[941,621],[923,633]]},
  {x: 1072, y: 716, sx: 7.5, sy: 10, n: 330, cut: 1.9, r: 3, box: true, color: '#f59a4e', alpha: .2, mode: 'source-over',
    extra: [[1061,693],[1075,694],[1061,701],[1070,738],[1068,698]]},
  {x: 1077, y: 715, sx: 5.8, sy: 8, n: 260, cut: 1.7, r: 3, box: true, color: '#f04a25', alpha: .35, mode: 'source-over'},
  {x: 973, y: 762, sx: 6.5, sy: 10, n: 560, cut: 2.2, r: 3.2, color: '#999', alpha: .5,
    extra: [[982,728],[974,735],[969,741],[976,741],[980,742],[956,748],[956,757],[970,787],[983,787],[975,786],[987,756],[996,753],[1002,758],[1003,770],[1001,776],[991,776],[985,777],[990,761],[987,762],[985,765],[991,763],[985,742],[983,771]]},
  {x: 670, y: 772, sx: 9, sy: 10.5, n: 700, cut: 2.05, r: 3.2, color: '#5aa046', alpha: .8, skew: -.3,
    extra: [[665,745],[675,747],[652,751],[684,757],[680,755],[656,755],[649,771],[649,777],[652,785],[651,791],[668,799],[676,797],[690,785],[681,795]]},
  {x: 714, y: 803, sx: 6.5, sy: 5, n: 300, cut: 2.3, r: 3, color: '#5a8fd0', alpha: .12},
  {x: 714, y: 804, sx: 6.5, sy: 3.2, n: 230, cut: 1.7, r: 3, box: true, color: '#4a7fc0', alpha: .13},
  {x: 724, y: 803, sx: 4, sy: 5, n: 40, cut: 2.2, r: 3, color: '#5a8fd0', alpha: .12},
  {x: 715, y: 813, sx: 6, sy: 4, n: 30, cut: 2, r: 3, color: '#5a8fd0', alpha: .06},
  {x: 882, y: 852, sx: 6, sy: 5, n: 260, cut: 2.2, r: 3.4, color: '#41a6b8', alpha: .05},
  {x: 1172, y: 899, sx: 7.5, sy: 11.5, n: 420, cut: 2, r: 3.2, box: true, color: '#c0392f', alpha: .75},
  {x: 1150, y: 896, sx: 6.5, sy: 11, n: 190, cut: 2, r: 3.2, box: true, color: '#c0392f', alpha: .75},
  {x: 1133, y: 894, sx: 6, sy: 9, n: 42, cut: 1.8, r: 3.2, color: '#c0392f', alpha: .85,
    extra: [[1154,870],[1126,882],[1120,895],[1134,915],[1145,918],[1174,927],[1186,881],[1138,877],[1176,877]]},
  {x: 650, y: 986, sx: 9, sy: 11, n: 620, cut: 2.1, r: 3.2, color: '#6f98cc', alpha: .55, skew: .22,
    extra: [[620,989],[643,966],[628,986],[640,1009],[650,1012],[657,1020],[667,960],[654,961],[669,963]]},
  {x: 701, y: 973, sx: 8.5, sy: 12, n: 430, cut: 2.1, r: 3.2, color: '#c85f9e', alpha: .65, skew: .2,
    extra: [[685,947],[724,947],[707,945],[716,948],[679,955],[675,967],[731,970],[686,995],[694,1001],[707,1005],[705,1007],[709,1007],[724,962],[725,978],[690,956],[717,990],[695,947],[702,952]]},
  {x: 701, y: 975, sx: 4.5, sy: 7, n: 150, cut: 2.1, r: 3, color: '#c85f9e', alpha: .65, skew: .2}
];
clouds.forEach(cloud);

// dense centres and strays of other labels
ctx.globalCompositeOperation = 'source-over';
for (const [x, y, w] of [[934, 639, 3], [934, 641, 2.5], [944, 641, 4], [943, 636, 3], [945, 642, 3]]) dot(x, y, w, '#120000', .6);
for (const [x, y] of [[937, 657], [925, 640], [947, 647], [938, 649]]) dot(x, y, 2.5, '#7d1a12', .45);
for (const [x, y] of [[1085, 716], [1070, 703]]) dot(x, y, 2.5, '#7d2a12', .4);
dot(702, 947, 3, '#174c86', 1);
dot(652, 965, 3, '#38112a', 1);
dot(987, 753, 3, '#1d5a1d', .9);
dot(686, 763, 3, '#c25955', .9);
dot(675, 995, 3, '#aaa', .6);
dot(950, 663, 3, '#98a', .6);
```
